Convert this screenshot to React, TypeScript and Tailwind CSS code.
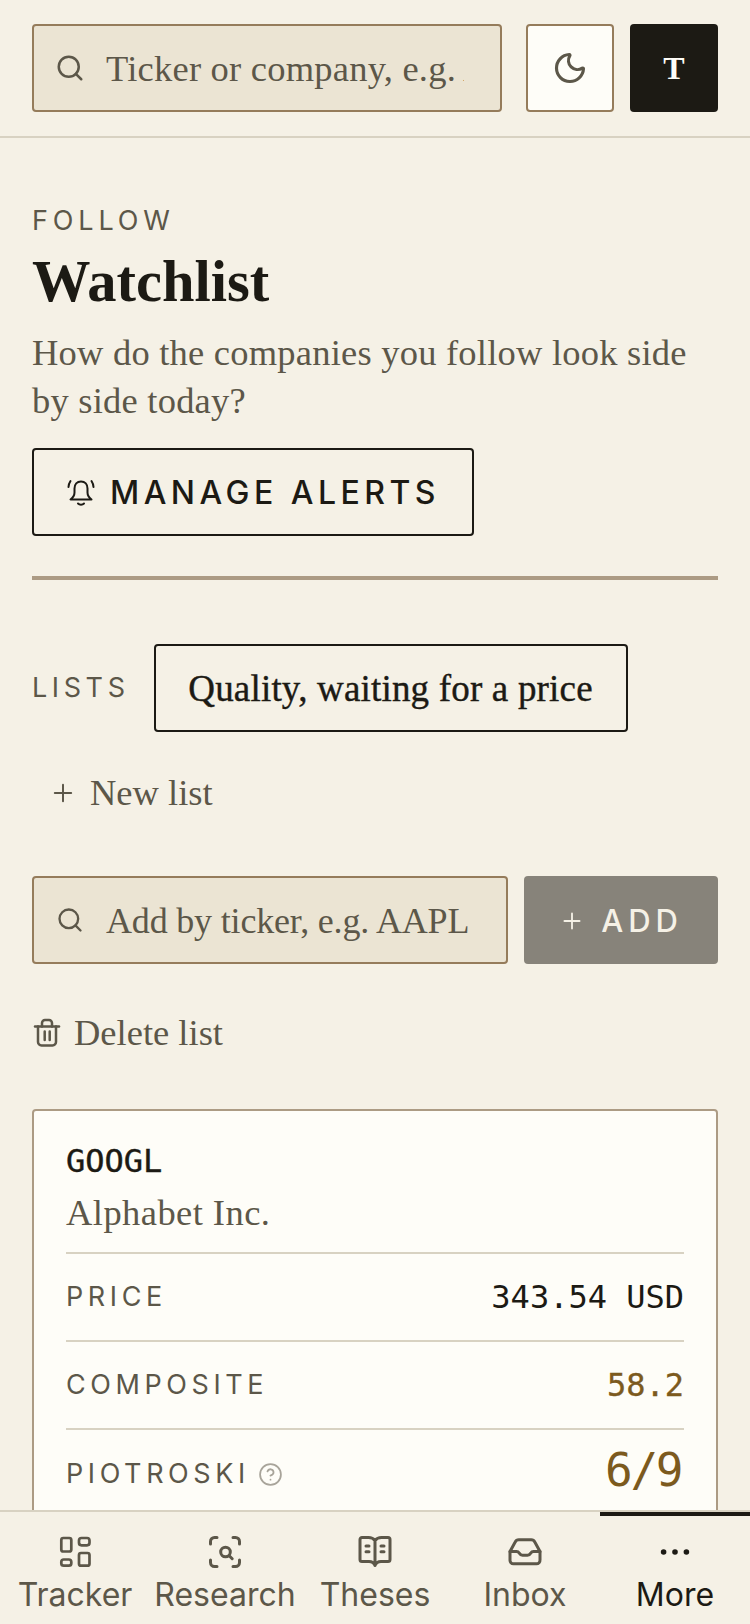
import { CircleHelp, Moon, Plus, Search } from "lucide-react";

const navItems = [
  { label: "Tracker", icon: <TrackerIcon /> },
  { label: "Research", icon: <ResearchIcon /> },
  { label: "Theses", icon: <ThesesIcon /> },
  { label: "Inbox", icon: <InboxIcon /> },
  { label: "More", icon: <MoreIcon />, active: true },
];

function TrackerIcon() {
  return (
    <svg width="36" height="36" viewBox="0 0 36 36" fill="none" stroke="currentColor" strokeWidth="2.700" strokeLinejoin="round">
      <rect x="4.300" y="4" width="10" height="13.500" rx="2" />
      <rect x="22" y="4" width="10.500" height="7.300" rx="2.500" />
      <rect x="4.300" y="25.500" width="10" height="6.200" rx="2.500" />
      <rect x="22" y="19" width="10.500" height="12.700" rx="2" />
    </svg>
  );
}

function ResearchIcon() {
  return (
    <svg width="36" height="36" viewBox="0 0 36 36" fill="none" stroke="currentColor" strokeWidth="3" strokeLinecap="round">
      <path d="M3.500 10V7.500a4 4 0 0 1 4-4H10M26 3.500h2.500a4 4 0 0 1 4 4V10M32.500 26v2.500a4 4 0 0 1-4 4H26M10 32.500H7.500a4 4 0 0 1-4-4V26" />
      <circle cx="18.500" cy="18" r="4.800" />
      <path d="M22.200 21.700l3 3" />
    </svg>
  );
}

function ThesesIcon() {
  return (
    <svg width="36" height="36" viewBox="0 0 36 36" fill="none" stroke="currentColor" strokeWidth="3" strokeLinecap="round" strokeLinejoin="round">
      <path d="M18 6.500C16.500 4.500 14 3.500 11.500 3.500H5a2 2 0 0 0-2 2V25.500a2 2 0 0 0 2 2h7c3 0 5 1.500 6 4 1-2.500 3-4 6-4h7a2 2 0 0 0 2-2V5.500a2 2 0 0 0-2-2H24.500C22 3.500 19.500 4.500 18 6.500zM18 6.500V31.500" />
      <path d="M9 12h3M9 17.700h3M24 12h3M24 17.700h3" />
    </svg>
  );
}

function InboxIcon() {
  return (
    <svg width="36" height="36" viewBox="0 0 36 36" fill="none" stroke="currentColor" strokeWidth="3" strokeLinecap="round" strokeLinejoin="round">
      <path d="M3 17.500 8.200 8a4 4 0 0 1 3.600-2.200H24.200A4 4 0 0 1 27.800 8L33 17.500V26a3.500 3.500 0 0 1-3.500 3.800H6.500A3.500 3.500 0 0 1 3 26z" />
      <path d="M3 17.500H9.500c1.500 0 2.200.7 3 1.800.8 1.200 1.800 2 3 2h5c1.200 0 2.200-.8 3-2 .8-1.100 1.500-1.800 3-1.800H33" />
    </svg>
  );
}

function MoreIcon() {
  return (
    <svg width="36" height="36" viewBox="0 0 18 18" fill="currentColor">
      <circle cx="3.300" cy="9" r="1.400" />
      <circle cx="9" cy="9" r="1.400" />
      <circle cx="14.700" cy="9" r="1.400" />
    </svg>
  );
}

function BellIcon() {
  return (
    <svg width="30" height="30" viewBox="0 0 30 30" fill="none" stroke="currentColor" strokeWidth="2" strokeLinecap="round" strokeLinejoin="round" className="shrink-0">
      <path d="M15 3.500c-4 0-6.500 3-6.500 7v4c0 3.500-2 5.500-4 7h21c-2-1.500-4-3.500-4-7v-4c0-4-2.500-7-6.500-7z" />
      <path d="M12 25.500c1.500 1.500 4.500 1.500 6 0" />
      <path d="M4.500 3c-1 1.500-1.800 3.500-2 6M25.500 3c1 1.500 1.800 3.500 2 6" />
    </svg>
  );
}

function TrashIcon() {
  return (
    <svg width="30" height="30" viewBox="0 0 30 30" fill="none" stroke="currentColor" strokeWidth="2.500" strokeLinecap="round" strokeLinejoin="round" className="shrink-0">
      <path d="M3 8.500H27" />
      <path d="M10 8.500V5a3 3 0 0 1 3-3h4a3 3 0 0 1 3 3v3.500" />
      <path d="M6 8.500V24a3.500 3.500 0 0 0 3.500 3.500h11a3.500 3.500 0 0 0 3.500-3.500V8.500" />
      <path d="M12.700 13.500v8.500M17.700 13.500v8.500" />
    </svg>
  );
}

function StatRow(props: { label: string; value: string; valueClass: string; help?: boolean }) {
  return (
    <div className="flex h-[88px] items-center justify-between border-b-2 border-[#d8d2c2] last:border-b-0">
      <div className="flex items-center gap-[8px]">
        <span className="font-['Inter',sans-serif] text-[27px] font-normal tracking-[0.17em] text-[#5c5749]">{props.label}</span>
        {props.help && <CircleHelp size={25} strokeWidth={1.7} className="text-[#a8a49a]" />}
      </div>
      <span className={props.valueClass}>{props.value}</span>
    </div>
  );
}

export default function App() {
  return (
    <div className="relative h-[1624px] w-[750px] overflow-hidden bg-[#f5f1e6] text-[#1c1a14]">
      <header className="flex h-[138px] gap-4 border-b-2 border-[#d8d2c2] px-8 pt-6">
        <div className="flex h-[88px] w-[470px] items-center gap-[21px] rounded-[4px] border-2 border-[#957c5b] bg-[#ebe4d3] pl-[21px] pr-[36px] text-[#5c5749]">
          <Search size={30} strokeWidth={2} className="shrink-0" />
          <span className="min-w-0 translate-y-[1px] overflow-hidden whitespace-nowrap font-['Liberation_Serif',serif] text-[36.5px] leading-[48px] tracking-[0.006em]">Ticker or company, e.g. AAPL</span>
        </div>
        <div className="ml-[8px] flex h-[88px] w-[88px] items-center justify-center rounded-[4px] border-2 border-[#957c5b] bg-[#fefdf8] text-[#5c5749]">
          <Moon size={36} strokeWidth={2.1} />
        </div>
        <div className="flex h-[88px] w-[88px] items-center justify-center rounded-[4px] bg-[#1c1a14] font-['Liberation_Serif',serif] text-[32px] font-bold text-[#fefdf8]">T</div>
      </header>

      <main className="px-8">
        <div className="pt-[65px] font-['Inter',sans-serif] text-[27px] leading-[36px] tracking-[0.18em] text-[#5c5749]">FOLLOW</div>
        <h1 className="mt-[7px] font-['Liberation_Serif',serif] text-[58.5px] leading-[72px] font-bold">Watchlist</h1>
        <p className="mt-[11px] font-['Liberation_Serif',serif] text-[36.5px] leading-[48px] tracking-[0.006em] text-[#5c5749]">How do the companies you follow look side by side today?</p>
        <button className="mt-[23px] flex h-[88px] w-[442px] items-center gap-[14px] rounded-[4px] border-2 border-[#1c1a14] pl-[32px] pt-[2px] font-['Inter',sans-serif] text-[32px] font-[450] tracking-[0.14em]">
          <BellIcon />
          MANAGE ALERTS
        </button>
        <div className="mt-[40px] h-1 bg-[#ac9b84]" />

        <div className="mt-[64px] flex items-center gap-[24px]">
          <span className="pt-[1px] font-['Inter',sans-serif] text-[27px] tracking-[0.17em] text-[#5c5749]">LISTS</span>
          <div className="flex h-[88px] w-[474px] items-center justify-center rounded-[4px] border-2 border-[#1c1a14] pt-[2px] font-['Liberation_Serif',serif] text-[37px] font-medium tracking-[0.005em] [-webkit-text-stroke:0.4px_#1c1a14]">Quality, waiting for a price</div>
        </div>
        <div className="mt-[32px] flex h-[58px] items-center gap-[13px] pl-[17px] font-['Liberation_Serif',serif] text-[36.5px] text-[#5c5749]">
          <Plus size={28} strokeWidth={1.7} />
          New list
        </div>

        <div className="mt-[54px] flex gap-4">
          <div className="flex h-[88px] w-[476px] items-center gap-[22px] rounded-[4px] border-2 border-[#957c5b] bg-[#ebe4d3] pl-[22px] text-[#5c5749]">
            <Search size={28} strokeWidth={2} />
            <span className="whitespace-nowrap pt-[2px] font-['Liberation_Serif',serif] text-[36px] tracking-[-0.005em]">Add by ticker, e.g. AAPL</span>
          </div>
          <div className="flex h-[88px] w-[194px] items-center justify-center gap-[16px] rounded-[4px] bg-[#87837a] pt-[2px] font-['Inter',sans-serif] text-[31px] font-medium tracking-[0.16em] text-[#f5f1e6]">
            <Plus size={26} strokeWidth={1.7} />
            ADD
          </div>
        </div>

        <div className="mt-[40px] flex h-[58px] items-center gap-[12px] font-['Liberation_Serif',serif] text-[36.5px] text-[#5c5749]">
          <TrashIcon />
          Delete list
        </div>

        <section className="mt-[47px] rounded-[4px] border-2 border-[#ac9b84] bg-[#fefdf8] px-[32px] pt-[28px] pb-[40px]">
          <div className="font-['DejaVu_Sans_Mono',monospace] text-[32px] leading-[44px] [-webkit-text-stroke:0.4px_#1c1a14]">GOOGL</div>
          <div className="mt-[6px] border-b-2 border-[#d8d2c2] pb-[15px] font-['Liberation_Serif',serif] text-[36.5px] leading-[48px] tracking-[0.012em] text-[#5c5749]">Alphabet Inc.</div>
          <StatRow label="PRICE" value="343.54 USD" valueClass="font-['DejaVu_Sans_Mono',monospace] text-[32px]" />
          <StatRow label="COMPOSITE" value="58.2" valueClass="font-['DejaVu_Sans_Mono',monospace] text-[32px] text-[#7c5a1e] [-webkit-text-stroke:0.3px_#7c5a1e]" />
          <StatRow help label="PIOTROSKI" value="6/9" valueClass="-translate-y-[4px] pr-[3px] font-['DejaVu_Sans_Mono',monospace] text-[46px] tracking-[-2.4px] text-[#7c5a1e]" />
        </section>
      </main>

      <nav className="absolute inset-x-0 bottom-0 flex h-[114px] border-t-2 border-[#d8d2c2] bg-[#f5f1e6]">
        {navItems.map((item) => (
          <div key={item.label} className={item.active ? "relative flex w-[150px] flex-col items-center pt-[22px] text-[#1c1a14]" : "relative flex w-[150px] flex-col items-center pt-[22px] text-[#5c5749]"}>
            {item.active && <div className="absolute inset-x-0 top-0 h-1 bg-[#1c1a14]" />}
            {item.icon}
            <span className="mt-[5px] font-['Inter',sans-serif] text-[32px] leading-[40px]">{item.label}</span>
          </div>
        ))}
      </nav>
    </div>
  );
}
